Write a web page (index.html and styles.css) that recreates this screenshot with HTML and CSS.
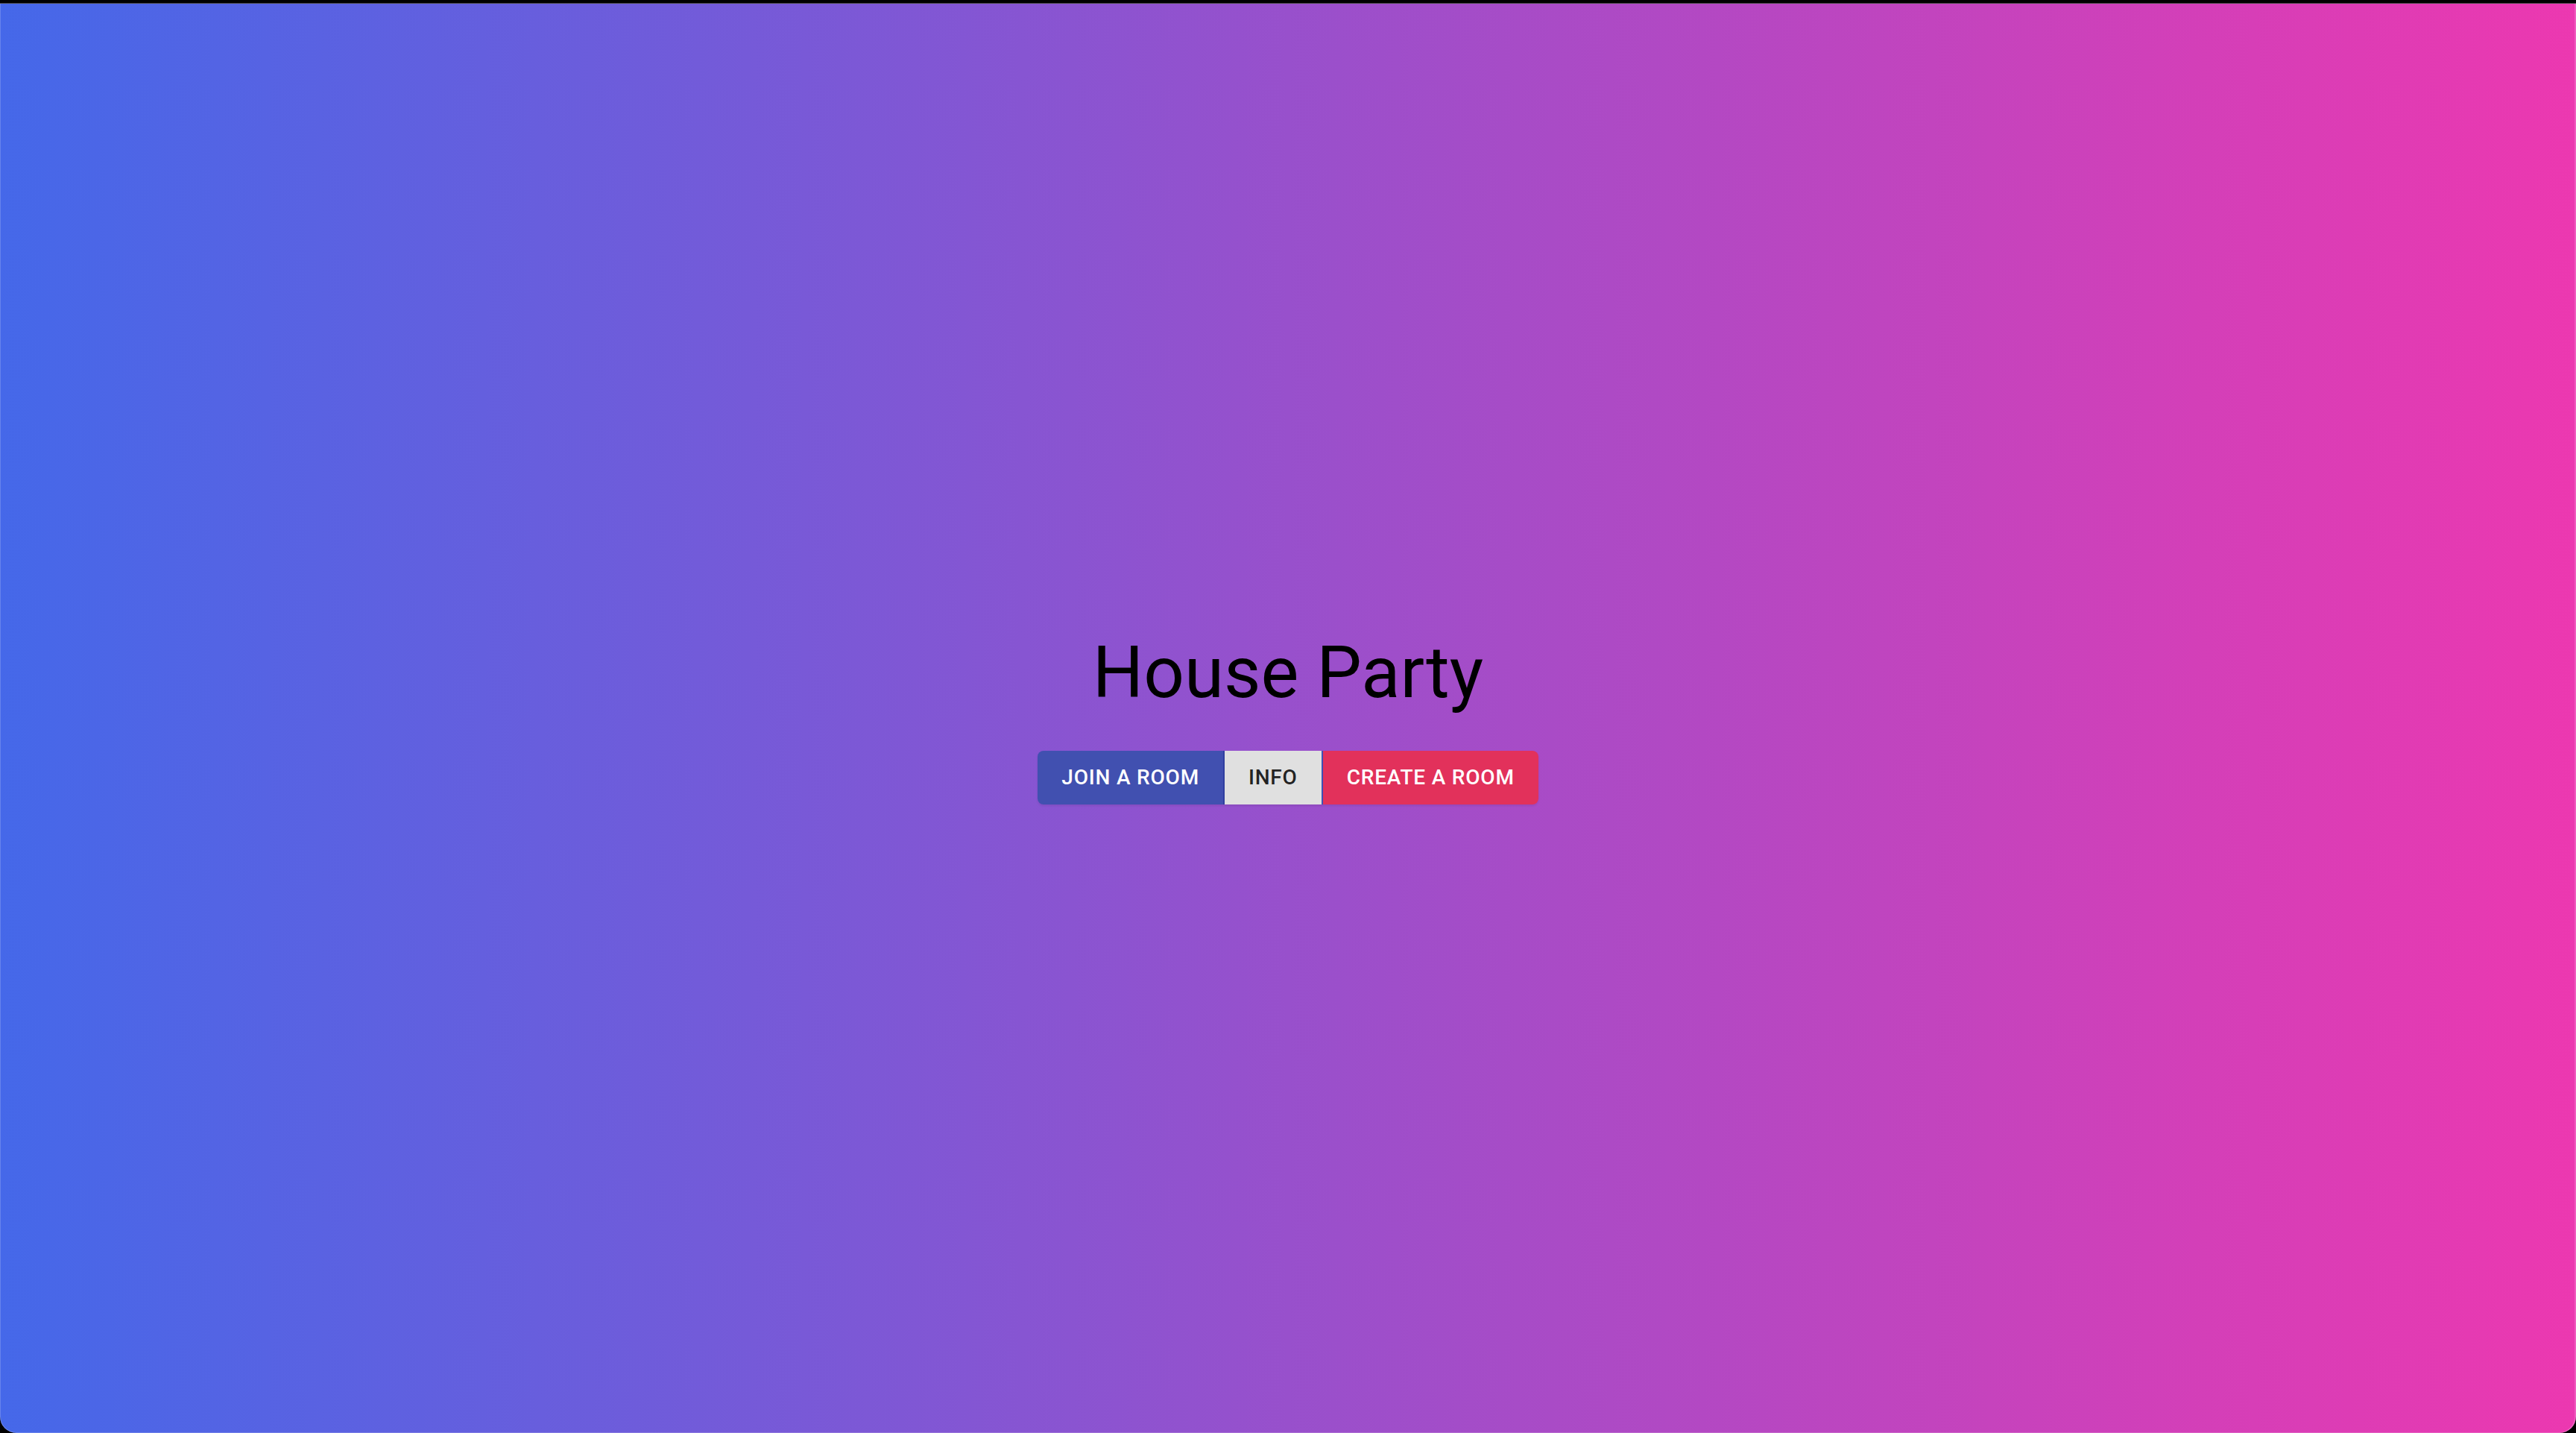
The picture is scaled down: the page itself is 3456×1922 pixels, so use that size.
FILE: index.html
```html
<!DOCTYPE html>
<html lang="en">
<head>
<meta charset="utf-8">
<title>House Party</title>
<link rel="stylesheet" href="styles.css">
</head>
<body>
<div class="topbar"></div>
<div class="window">
  <main class="home">
    <h1 class="title">House Party</h1>
    <div class="btn-group" role="group">
      <button class="btn btn-primary">Join a Room</button>
      <button class="btn btn-default">Info</button>
      <button class="btn btn-secondary">Create a Room</button>
    </div>
  </main>
</div>
</body>
</html>
```
FILE: styles.css
```css
html, body {
  margin: 0;
  padding: 0;
  width: 100%;
  height: 100%;
}

body {
  background: #000;
  display: flex;
  flex-direction: column;
  font-family: Roboto, "Helvetica", Arial, sans-serif;
  overflow: hidden;
}

.topbar {
  height: 4px;
  background: #000;
  border-bottom: 1px solid #4d4d4d;
  flex: none;
}

.window {
  flex: 1;
  background: linear-gradient(90deg, #4568e9 0%, #9850cc 50%, #ec38b0 100%);
  border-radius: 0 0 22px 22px;
  box-shadow: inset 1px 0 0 rgba(255, 255, 255, 0.18), inset -2px 0 0 rgba(255, 255, 255, 0.18), inset 0 -1px 0 rgba(255, 255, 255, 0.18);
  display: flex;
  align-items: center;
  justify-content: center;
}

.home {
  display: flex;
  flex-direction: column;
  align-items: center;
  gap: 48px;
  margin-top: -2px;
}

.title {
  margin: 0;
  font-family: Roboto, sans-serif;
  font-weight: 400;
  font-size: 96px;
  line-height: 1.167;
  letter-spacing: 0;
  color: #000;
}

.btn-group {
  display: flex;
  border-radius: 8px;
  box-shadow: 0 2px 3px rgba(0, 0, 0, 0.08);
}

.btn {
  font-family: Roboto, sans-serif;
  font-weight: 500;
  font-size: 28px;
  line-height: 1.75;
  letter-spacing: 0.02857em;
  text-transform: uppercase;
  padding: 11.5px 32px;
  min-width: 128px;
  border: 0;
  margin: 0;
  cursor: pointer;
}

.btn-primary {
  background: #4150b0;
  color: #fff;
  border-radius: 8px 0 0 8px;
  border-right: 2px solid #303f9f;
}

.btn-default {
  background: #e0e0e0;
  color: rgba(0, 0, 0, 0.87);
  border-right: 2px solid #3f51b5;
}

.btn-secondary {
  background: #e2315b;
  color: #fff;
  border-radius: 0 8px 8px 0;
}
```
